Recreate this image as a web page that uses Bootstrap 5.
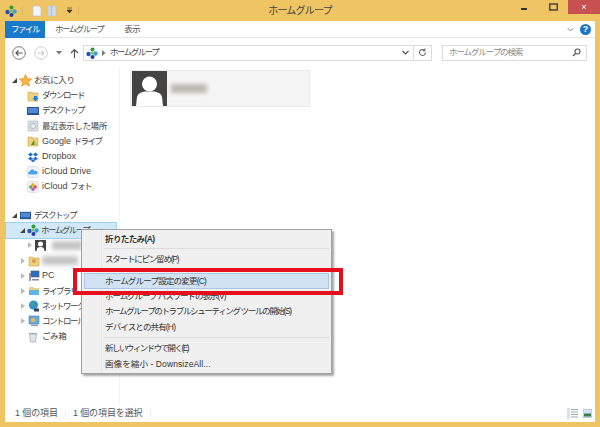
<!DOCTYPE html>
<html lang="ja">
<head>
<meta charset="UTF-8">
<meta name="viewport" content="width=device-width, initial-scale=1">
<title>ホームグループ</title>
<link href="https://cdn.jsdelivr.net/npm/bootstrap@5.3.0/dist/css/bootstrap.min.css" rel="stylesheet">
<style>
  html, body { width: 600px; height: 427px; overflow: hidden; margin: 0; }
  body { background: #efc564; font-family: "Liberation Sans", "Noto Sans CJK JP", sans-serif; font-size: 9px; color: #333; position: relative; }
  svg { display: block; flex: none; }
  .kana { font-size: 8.5px; letter-spacing: -1.5px; }
  .kanji { font-size: 8.5px; letter-spacing: -.4px; }
  .title-bar { height: 21px; padding-left: 5px; }
  .qat { width: 75px; gap: 5px; flex: none; }
  .qat-sep { width: 1px; height: 9px; background: #d9b560; }
  .title-text { font-size: 10px; color: #444; letter-spacing: -.8px; width: 420px; flex: none; text-align: center; margin-left: 10px; }
  .win-btns { margin-left: auto; margin-right: 4px; height: 14px; align-self: flex-start; }
  .win-min, .win-max { width: 29px; height: 14px; }
  .win-close { width: 32px; height: 14px; background: #c75050; color: #fff; font-size: 9px; line-height: 14px; text-align: center; }
  .win-body { margin: 0 5px; height: 401px; background: #fff; }
  .ribbon-tabs { height: 17px; border-bottom: 1px solid #e6e6e6; }
  .tab-file { width: 40px; background: #1979ca; color: #fff; text-align: center; line-height: 17px; height: 17px; }
  .tab-item { line-height: 17px; color: #555; }
  .tab-first { margin-left: 10px; }
  .tab-second { margin-left: 21px; }
  .ribbon-right { margin-left: auto; margin-right: 4px; gap: 6px; }
  .help-dot { width: 11px; height: 11px; border-radius: 50%; background: #1b74c5; color: #fff; font-size: 9px; font-weight: 700; line-height: 11px; text-align: center; }
  .addr-row { height: 29px; padding-left: 7px; }
  .nav-round { width: 14px; height: 14px; }
  .addr-box { width: 349px; height: 16px; border: 1px solid #dcdcdc; margin-left: 4px; padding-left: 2px; color: #444; }
  .addr-end { margin-left: auto; height: 100%; }
  .addr-refresh { width: 18px; height: 100%; border-left: 1px solid #dcdcdc; }
  .search-box { width: 145px; height: 16px; border: 1px solid #dcdcdc; margin-left: 10px; padding: 0 5px 0 6px; color: #888; }
  .search-text { font-size: 8.5px; letter-spacing: -1.100px; }
  .pane-row { height: 338px; }
  .side-pane { width: 115px; border-right: 1px solid #f2f2f2; padding-top: 6px; }
  .tree-row { height: 15.2px; line-height: 15px; padding-left: 22px; gap: 3px; color: #444; white-space: nowrap; }
  .tree-root { padding-left: 7px; gap: 2px; }
  .tree-sub { padding-left: 16px; gap: 2px; }
  .tree-user { padding-left: 23px; gap: 2px; }
  .tree-selected { margin: 0 3px 0 1px; background: #d1e8f8; outline: 1px solid #9fd0ee; padding-left: 14px; gap: 2px; }
  .tree-gap { height: 13px; }
  .arrow-open { width: 0; height: 0; border-left: 5px solid transparent; border-bottom: 5px solid #444; flex: none; }
  .arrow-closed { width: 0; height: 0; border-top: 3.5px solid transparent; border-bottom: 3.5px solid transparent; border-left: 4px solid #bbb; flex: none; margin-right: 1px; }
  .blur-name { height: 9px; background: #c4c4c4; filter: blur(2px); }
  .content-pane { padding: 3px 0 0 10px; }
  .user-tile { width: 180px; height: 37px; background: #f5f5f5; border: 1px solid #e9e9e9; padding: 1px; }
  .user-pic { width: 35px; height: 35px; }
  .user-name { width: 36px; margin-left: 4px; background: #bdb8b0; }
  .status-row { height: 17px; padding-left: 10px; color: #555; letter-spacing: -.1px; }
  .status-sep { width: 1px; height: 8px; background: #eee; margin: 0 7px; }
  .status-views { margin-left: auto; margin-right: 3px; gap: 5px; }
  .ctx-menu { position: absolute; left: 81px; top: 229px; width: 251px; height: 145px; border: 1px solid #a0a0a0; box-shadow: 2px 2px 2px rgba(0,0,0,.35); padding: 2px; z-index: 5; font-size: 8.5px;
    background: linear-gradient(to right, #f0f0f0 19px, #e6e6e6 19px, #e6e6e6 20px, #f0f0f0 20px); }
  .ctx-item { height: 15.4px; line-height: 15px; padding-left: 21px; color: #333; white-space: nowrap; letter-spacing: -.85px; }
  .ctx-bold { font-weight: 700; height: 14.4px; letter-spacing: -.6px; }
  .ctx-line { height: 1px; background: #dcdcdc; margin: 2px 0 3px 20px; }
  .ctx-start { letter-spacing: -1.200px; }
  .ctx-hot { background: #d1e2f2; outline: 1px solid #a9c8e6; outline-offset: -1px; height: 16px; line-height: 16px; margin: 5.200px 0 0; letter-spacing: -.8px; }
  .ctx-pass { letter-spacing: -1.050px; }
  .ctx-tight { letter-spacing: -1.350px; }
  .ctx-new { letter-spacing: -1.550px; }
  .ctx-wide { letter-spacing: .1px; }
  .red-mark { position: absolute; left: 73px; top: 268px; width: 270px; height: 27px; border: 4px solid #e60f1e; z-index: 6; }
</style>
</head>
<body>

<svg width="0" height="0" class="position-absolute">
  <symbol id="i-home" viewBox="0 0 12 12">
    <circle cx="6.500" cy="2.500" r="2" fill="#2f9a2f"/><circle cx="2.500" cy="7" r="2.200" fill="#2553b8"/>
    <circle cx="9.500" cy="6.500" r="2.200" fill="#3f9fd8"/><circle cx="6.500" cy="10" r="2" fill="#1d3fa0"/>
    <circle cx="6" cy="6" r="1.600" fill="#79c050"/>
  </symbol>
  <symbol id="i-folder" viewBox="0 0 12 12">
    <path d="M1 2h4l1 1h5v8H1z" fill="#eed17c" stroke="#cda94e" stroke-width=".6"/>
  </symbol>
  <symbol id="i-desk" viewBox="0 0 12 12">
    <rect x="0" y="2" width="12" height="8" fill="#2a4f96"/><rect x="1" y="3" width="10" height="5" fill="#4f8ad4"/>
  </symbol>
</svg>

<div class="title-bar d-flex align-items-center">
  <div class="qat d-flex align-items-center">
    <svg width="12" height="12"><use href="#i-home"/></svg>
    <span class="qat-sep"></span>
    <svg class="ms-1" width="10" height="12" viewBox="0 0 10 12"><path d="M1 1h6l2 2v8H1z" fill="#f3f6fb" stroke="#b8c6d8" stroke-width=".7"/></svg>
    <svg width="10" height="12" viewBox="0 0 10 12"><path d="M1 1h3v10H1zM5 1h4v10H5z" fill="#cfdcec" stroke="#b0bfd2" stroke-width=".5"/></svg>
    <svg class="ms-1" width="7" height="7" viewBox="0 0 7 7"><path d="M1 1h5M1 3l2.500 3L6 3z" fill="#333" stroke="#333" stroke-width=".6"/></svg>
    <span class="qat-sep"></span>
  </div>
  <div class="title-text">ホームグループ</div>
  <div class="win-btns d-flex">
    <div class="win-min d-flex align-items-center justify-content-center">
      <svg width="7" height="7" viewBox="0 0 7 7"><rect y="4" width="6" height="2" fill="#333"/></svg>
    </div>
    <div class="win-max d-flex align-items-center justify-content-center">
      <svg width="9" height="8" viewBox="0 0 9 8"><rect x=".75" y="1" width="7.500" height="6" fill="none" stroke="#333" stroke-width="1.300"/></svg>
    </div>
    <div class="win-close">×</div>
  </div>
</div>

<div class="win-body d-flex flex-column">
  <div class="ribbon-tabs d-flex">
    <div class="tab-file kana">ファイル</div>
    <div class="tab-item tab-first kana">ホームグループ</div>
    <div class="tab-item tab-second kanji">表示</div>
    <div class="ribbon-right d-flex align-items-center">
      <svg width="7" height="5" viewBox="0 0 7 5"><path d="M.5 1l3 3 3-3" fill="none" stroke="#888"/></svg>
      <div class="help-dot">?</div>
    </div>
  </div>

  <div class="addr-row d-flex align-items-center">
    <svg class="nav-round" viewBox="0 0 14 14"><circle cx="7" cy="7" r="6.300" fill="#fff" stroke="#777"/><path d="M10.500 7H4M6.500 4.500L4 7l2.500 2.500" fill="none" stroke="#555" stroke-width="1.200"/></svg>
    <svg class="nav-round ms-2" viewBox="0 0 14 14"><circle cx="7" cy="7" r="6.300" fill="#fff" stroke="#ccc"/><path d="M3.500 7H10M7.500 4.500L10 7l-2.500 2.500" fill="none" stroke="#ccc" stroke-width="1.200"/></svg>
    <svg class="ms-2" width="6" height="4" viewBox="0 0 6 4"><path d="M0 0h6L3 3.500z" fill="#777"/></svg>
    <svg class="ms-2" width="9" height="10" viewBox="0 0 9 10"><path d="M4.500 10V1.500M1 5l3.500-3.500L8 5" fill="none" stroke="#555" stroke-width="1.200"/></svg>
    <div class="addr-box d-flex align-items-center">
      <svg width="12" height="12"><use href="#i-home"/></svg>
      <svg class="mx-1" width="4" height="6" viewBox="0 0 4 6"><path d="M0 0l3.500 3L0 6z" fill="#777"/></svg>
      <span class="kana">ホームグループ</span>
      <div class="addr-end d-flex align-items-center">
        <svg class="me-1" width="7" height="5" viewBox="0 0 7 5"><path d="M.5 1l3 3 3-3" fill="none" stroke="#555" stroke-width="1.200"/></svg>
        <div class="addr-refresh d-flex align-items-center justify-content-center">
          <svg width="9" height="9" viewBox="0 0 9 9"><path d="M7.500 4.500a3 3 0 1 1-1-2.300M6.800 .5v2.200H4.600" fill="none" stroke="#666" stroke-width="1.100"/></svg>
        </div>
      </div>
    </div>
    <div class="search-box d-flex align-items-center justify-content-between">
      <span class="search-text">ホームグループの検索</span>
      <svg width="9" height="9" viewBox="0 0 9 9"><circle cx="5.500" cy="3.500" r="2.500" fill="none" stroke="#555" stroke-width="1.100"/><path d="M3.500 5.500L1 8" stroke="#555" stroke-width="1.500"/></svg>
    </div>
  </div>

  <div class="pane-row d-flex">
    <div class="side-pane">
      <div class="tree-row tree-root d-flex align-items-center">
        <span class="arrow-open"></span>
        <svg width="13" height="13" viewBox="0 0 13 13"><path d="M6.500 .5l1.900 4 4.300.5-3.200 3 .9 4.300-3.900-2.200-3.900 2.200.9-4.300L.3 5l4.300-.5z" fill="#f6b545" stroke="#e08a20" stroke-width=".6"/></svg>
        <span class="kanji">お気に入り</span>
      </div>
      <div class="tree-row d-flex align-items-center"><svg width="12" height="12" viewBox="0 0 12 12"><use href="#i-folder"/><path d="M7 6h3v2h1.500L8.500 11.500 5.500 8H7z" fill="#2a7fd0"/></svg><span class="kana">ダウンロード</span></div>
      <div class="tree-row d-flex align-items-center"><svg width="12" height="12"><use href="#i-desk"/></svg><span class="kana">デスクトップ</span></div>
      <div class="tree-row d-flex align-items-center"><svg width="12" height="12" viewBox="0 0 12 12"><rect x="1" y="1" width="10" height="10" rx="1" fill="#d5dde2" stroke="#aeb9c0" stroke-width=".6"/><circle cx="6" cy="6" r="2.500" fill="#eef2f4" stroke="#8fa0aa" stroke-width=".6"/></svg><span class="kanji">最近表示した場所</span></div>
      <div class="tree-row d-flex align-items-center"><svg width="12" height="12" viewBox="0 0 12 12"><use href="#i-folder"/><path d="M7 5l3 5H4z" fill="#3a9a48"/><path d="M7 5l3 5H7.500z" fill="#f4c430"/></svg><span>Google <span class="kana">ドライブ</span></span></div>
      <div class="tree-row d-flex align-items-center"><svg width="12" height="12" viewBox="0 0 12 12"><path d="M3.500 1.500L6 3.500 3.500 5.500 1 3.500zM8.500 1.500L11 3.500 8.500 5.500 6 3.500zM3.500 5.800L6 7.800 3.500 9.500 1 7.800zM8.500 5.800L11 7.800 8.500 9.500 6 7.800zM3.800 9.800L6 8.300l2.200 1.500L6 11.300z" fill="#1f6fd6"/></svg><span>Dropbox</span></div>
      <div class="tree-row d-flex align-items-center"><svg width="12" height="12" viewBox="0 0 12 12"><rect x=".5" y=".5" width="11" height="11" rx="2" fill="#eef2f6" stroke="#ccd" stroke-width=".5"/><path d="M2.500 8.500a1.500 1.500 0 0 1 .3-3 2.500 2.500 0 0 1 4.700-.5 1.800 1.800 0 0 1 2 3.500z" fill="#4aa5e8"/></svg><span>iCloud Drive</span></div>
      <div class="tree-row d-flex align-items-center"><svg width="12" height="12" viewBox="0 0 12 12"><rect x=".5" y=".5" width="11" height="11" rx="2" fill="#f2f2f2" stroke="#ccc" stroke-width=".5"/><circle cx="6" cy="3.800" r="1.700" fill="#f0b020"/><circle cx="8.200" cy="6" r="1.700" fill="#e5502f"/><circle cx="6" cy="8.200" r="1.700" fill="#b05bc8"/><circle cx="3.800" cy="6" r="1.700" fill="#4fae5a"/></svg><span>iCloud <span class="kana">フォト</span></span></div>
      <div class="tree-gap"></div>
      <div class="tree-row tree-root d-flex align-items-center">
        <span class="arrow-open"></span>
        <svg width="13" height="11"><use href="#i-desk"/></svg>
        <span class="kana">デスクトップ</span>
      </div>
      <div class="tree-row tree-selected d-flex align-items-center">
        <span class="arrow-open"></span>
        <svg width="12" height="12"><use href="#i-home"/></svg>
        <span class="kana">ホームグループ</span>
      </div>
      <div class="tree-row tree-user d-flex align-items-center">
        <span class="arrow-closed"></span>
        <svg width="11" height="11" viewBox="0 0 35 35"><rect width="35" height="35" fill="#444"/><circle cx="17.500" cy="13" r="8" fill="#fff"/><path d="M5 35c0-10 5-13 12.500-13S30 25 30 35z" fill="#fff"/></svg>
        <div class="blur-name ms-1" style="width:30px"></div>
      </div>
      <div class="tree-row tree-sub d-flex align-items-center">
        <span class="arrow-closed"></span>
        <svg width="12" height="12" viewBox="0 0 12 12"><use href="#i-folder"/><circle cx="6" cy="6" r="2" fill="#d89a50"/></svg>
        <div class="blur-name" style="width:36px"></div>
      </div>
      <div class="tree-row tree-sub d-flex align-items-center">
        <span class="arrow-closed"></span>
        <svg width="12" height="12" viewBox="0 0 12 12"><rect x="3" y="1" width="8" height="6" fill="#2a6fc0" stroke="#556" stroke-width=".6"/><rect x="1" y="3" width="2" height="8" fill="#99a"/><rect x="4" y="9" width="7" height="1.500" fill="#889"/></svg>
        <span>PC</span>
      </div>
      <div class="tree-row tree-sub d-flex align-items-center">
        <span class="arrow-closed"></span>
        <svg width="12" height="12" viewBox="0 0 12 12"><path d="M1 2h4l1 1h5v7H1z" fill="#e9cf7f"/><path d="M1 5h10v5H1z" fill="#62b4e6"/></svg>
        <span class="kana">ライブラリ</span>
      </div>
      <div class="tree-row tree-sub d-flex align-items-center">
        <span class="arrow-closed"></span>
        <svg width="12" height="12" viewBox="0 0 12 12"><circle cx="5.500" cy="5" r="4.500" fill="#2f8fd8"/><path d="M3 2l3 1-1 3-2-1zM7 6l2 1-2 2z" fill="#4fae4a"/><rect x="6" y="8.500" width="5" height="3" fill="#345"/></svg>
        <span class="kana">ネットワーク</span>
      </div>
      <div class="tree-row tree-sub d-flex align-items-center">
        <span class="arrow-closed"></span>
        <svg width="12" height="12" viewBox="0 0 12 12"><rect x="1" y="1" width="10" height="8" fill="#6aa9de" stroke="#4b7fb0" stroke-width=".6"/><circle cx="5" cy="5" r="2" fill="#f0c040"/><rect x="3" y="9.500" width="7" height="1.500" fill="#8ea0b0"/></svg>
        <span class="kana">コントロール</span>
      </div>
      <div class="tree-row d-flex align-items-center">
        <svg width="12" height="12" viewBox="0 0 12 12"><path d="M2.500 3h7l-1 8h-5z" fill="#dfe7ee" stroke="#99a8b5" stroke-width=".7"/><path d="M2 2.500h8" stroke="#99a8b5"/></svg>
        <span class="kanji">ごみ箱</span>
      </div>
    </div>

    <div class="content-pane flex-grow-1">
      <div class="user-tile d-flex align-items-center">
        <svg class="user-pic" viewBox="0 0 35 35"><rect width="35" height="35" fill="#444"/><circle cx="17.500" cy="13" r="7.500" fill="#fff"/><path d="M4 35l1-9c.5-3 4-5 8-5.500h9c4 .5 7.500 2.500 8 5.500l1 9z" fill="#fff"/></svg>
        <div class="blur-name user-name"></div>
      </div>
    </div>
  </div>

  <div class="status-row d-flex align-items-center">
    <span>1 個の項目</span>
    <span class="status-sep"></span>
    <span>1 個の項目を選択</span>
    <span class="status-sep"></span>
    <div class="status-views d-flex align-items-center">
      <svg width="11" height="11" viewBox="0 0 11 11"><rect width="3" height="11" fill="#dcdfe6"/><path d="M4 1.500h7M4 4h7M4 6.500h7M4 9h7" stroke="#9aa"/></svg>
      <svg width="9" height="9" viewBox="0 0 9 9"><rect width="9" height="9" fill="#cfe3f2" stroke="#9ab" stroke-width=".6"/><rect x="1" y="4.500" width="7" height="3" fill="#3c7d50"/></svg>
    </div>
  </div>
</div>

<div class="ctx-menu">
  <div class="ctx-item ctx-bold">折りたたみ(A)</div>
  <div class="ctx-line"></div>
  <div class="ctx-item ctx-start">スタートにピン留め(P)</div>
  <div class="ctx-item ctx-hot">ホームグループ設定の変更(C)</div>
  <div class="ctx-item ctx-pass">ホームグループ パスワードの表示(V)</div>
  <div class="ctx-item ctx-tight">ホームグループのトラブルシューティング ツールの開始(S)</div>
  <div class="ctx-item">デバイスとの共有(H)</div>
  <div class="ctx-line"></div>
  <div class="ctx-item ctx-new">新しいウィンドウで開く(E)</div>
  <div class="ctx-item ctx-wide">画像を縮小 - DownsizeAll...</div>
</div>
<div class="red-mark"></div>

<script src="https://cdn.jsdelivr.net/npm/bootstrap@5.3.0/dist/js/bootstrap.bundle.min.js"></script>
</body>
</html>
